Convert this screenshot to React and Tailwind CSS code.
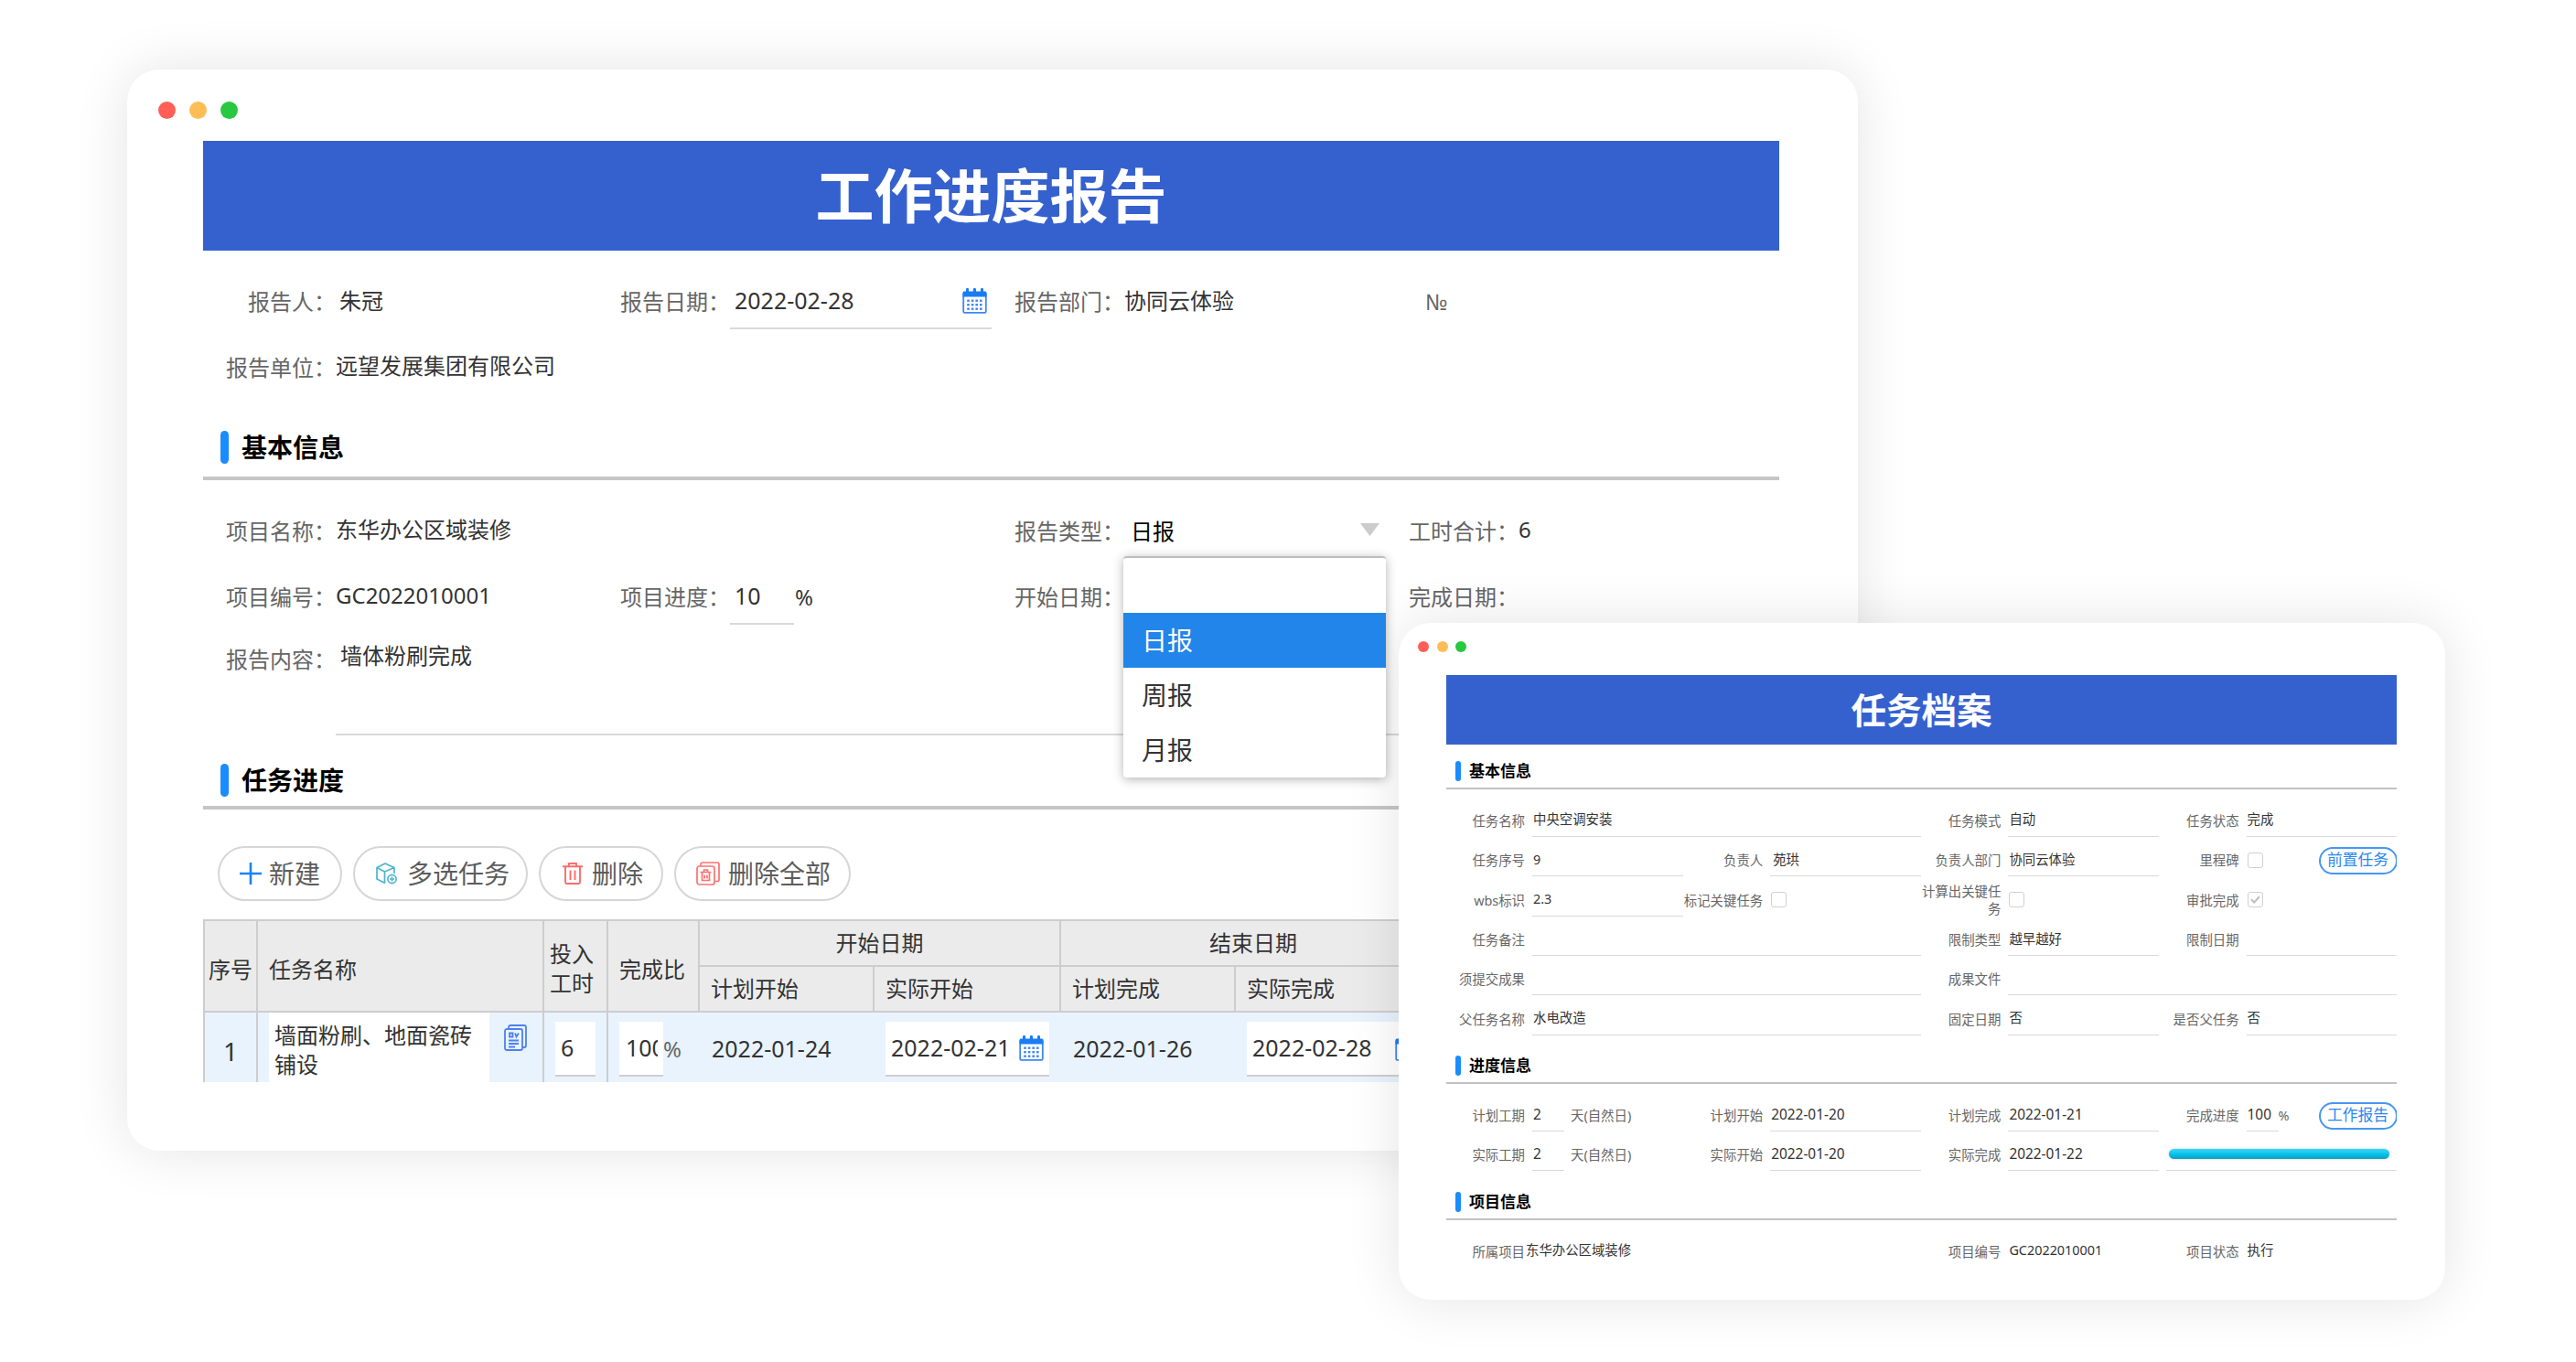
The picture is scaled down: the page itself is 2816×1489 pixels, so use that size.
import clsx from 'clsx';

const CalendarIcon = ({ className }) => (
  <svg viewBox="0 0 27 28" className={clsx('shrink-0', className)} fill="none">
    <path d="M1.2 5.5v20a1.3 1.3 0 0 0 1.3 1.3h22a1.3 1.3 0 0 0 1.3-1.3v-20" stroke="#3f86f5" strokeWidth="1.8" />
    <path d="M.5 9.5V5.2C.5 4 1.2 3.4 2.4 3.4H4V1.2C4 .5 4.500 0 5.500 0S7 .5 7 1.200v2.200h4.800V1.200C11.800.5 12.500 0 13.400 0s1.600.5 1.600 1.200v2.200h5V1.200C20 .5 20.600 0 21.500 0S23 .5 23 1.200v2.200h1.600c1.200 0 1.900.6 1.900 1.800v4.300z" fill="#1a7cf5" />
    {[12.5, 17, 21.500].map((y) =>
      [5.2, 9.8, 14.4, 19].map((x) => <rect key={`${x}-${y}`} x={x} y={y} width="2.6" height="2.4" fill="#3f86f5" />)
    )}
  </svg>
);

const PlusIcon = () => (
  <svg viewBox="0 0 24 24" className="w-6 h-6 shrink-0" fill="none" stroke="#1a84f5" strokeWidth="2.6">
    <path d="M12 0v24M0 12h24" />
  </svg>
);

const CubeIcon = () => (
  <svg viewBox="0 0 24 24" className="w-6 h-6 shrink-0" fill="none" stroke="#4fb3cf" strokeWidth="1.700" strokeLinejoin="round">
    <path d="M11 22.500 2 18V5.500L11 1l10 4.500V12M2 5.500 10.500 10 21 5.500M10.500 10v12.500" />
    <circle cx="18.500" cy="18" r="4.600" />
    <path d="M18.500 15.500v5M16 18h5" />
  </svg>
);

const TrashIcon = () => (
  <svg viewBox="0 0 22 24" className="w-[22px] h-6 shrink-0" fill="none" stroke="#ff6b6b" strokeWidth="1.900">
    <path d="M0 4.200h22M7 3.500V1h8v2.500M3 4.500V21a2 2 0 0 0 2 2h12a2 2 0 0 0 2-2V4.500M8.500 8.500v10.500M13.500 8.500v10.500" />
  </svg>
);

const TrashAllIcon = () => (
  <svg viewBox="0 0 26 26" className="w-[26px] h-[26px] shrink-0" fill="none" stroke="#ff7070" strokeWidth="1.700">
    <rect x="1" y="5" width="19" height="20" rx="2.500" />
    <path d="M5 4.500V3a2 2 0 0 1 2-2h16a2 2 0 0 1 2 2v16.500a2 2 0 0 1-2 2h-2.500M4.500 11.500h12M8.500 11V9h4v2M6.500 12v8.500h8V12M9.200 14.500v4M12 14.500v4" />
  </svg>
);

const CopyIcon = () => (
  <svg viewBox="0 0 25 29" className="w-[25px] h-[29px] shrink-0" fill="none" stroke="#4d80f0" strokeWidth="1.800">
    <rect x="1" y="5" width="19" height="23" rx="2" />
    <path d="M5 4.500V3a2 2 0 0 1 2-2h15a2 2 0 0 1 2 2v20a2 2 0 0 1-2 2h-1.500M5 17.500h11M5 21h11M5 24.500h7M6 9.500v4h3.500v-4zM12 9.500l1.500 4 2.500-4" />
  </svg>
);

/* ---------- Work progress report window ---------- */

const Label = ({ children, className }) => (
  <div className={clsx('w-[145px] shrink-0 text-right text-[24px] leading-8 text-[#666] whitespace-nowrap', className)}>{children}</div>
);

const Value = ({ children, className }) => (
  <div className={clsx('w-[286px] shrink-0 text-[24px] leading-8 text-[#333] whitespace-nowrap', className)}>{children}</div>
);

const SectionTitle = ({ children, className }) => (
  <div className={clsx('flex items-end border-b-4 border-[#c6c6c6] pl-[19px]', className)}>
    <div className="flex items-center h-9 gap-[14px]">
      <span className="w-[9px] h-9 rounded-full bg-[#1a8cff]" />
      <span className="text-[28px] leading-9 font-bold text-black">{children}</span>
    </div>
  </div>
);

const ToolButton = ({ icon, children, className }) => (
  <button className={clsx('h-[60px] flex items-center rounded-full border-2 border-[#d6d6d6] bg-white text-[28px] leading-none text-[#5c5c5c] whitespace-nowrap pl-[22px]', className)}>
    {icon}
    {children}
  </button>
);

const Th = ({ children, className }) => (
  <div className={clsx('flex items-center border-l-2 border-t-2 border-[#cdcdcd] bg-[#ebebeb] text-[24px] leading-8 text-[#333]', className)}>{children}</div>
);

const CellInput = ({ children, className }) => (
  <div className={clsx('h-[60px] flex items-center bg-white border-b-2 border-[#cfcfcf] text-[25px] text-[#333]', className)}>{children}</div>
);

const TypeSelect = () => (
  <div className="relative w-[286px] shrink-0 flex items-center justify-between pl-[7px] pr-[7px] text-[24px] leading-8 text-black">
    日报
    <svg viewBox="0 0 21 14" className="w-[21px] h-[14px] mb-1 fill-[#cccccc]">
      <path d="M0 0h21L10.500 14z" />
    </svg>
    <ul className="absolute z-10 left-[-1px] top-[43px] w-[287px] h-[242px] border-t-2 border-[#bdbdbd] rounded-[4px] bg-white shadow-[0_2px_12px_rgba(0,0,0,0.3)] text-[28px] leading-[60px] text-[#333]">
      <li className="h-[60px]" />
      <li className="h-[60px] pl-5 bg-[#2185ea] text-white">日报</li>
      <li className="h-[60px] pl-5">周报</li>
      <li className="h-[60px] pl-5">月报</li>
    </ul>
  </div>
);

const ReportWindow = () => (
  <div className="absolute left-[139px] top-[76px] w-[1892px] h-[1182px] rounded-[35px] bg-white shadow-[0_0_60px_rgba(0,0,0,0.11)]">
    <div className="h-[78px] flex items-center gap-[15px] pl-[34px] pt-[11px]">
      <span className="w-[19px] h-[19px] rounded-full bg-[#ff5f57]" />
      <span className="w-[19px] h-[19px] rounded-full bg-[#ffbd55]" />
      <span className="w-[19px] h-[19px] rounded-full bg-[#28c840]" />
    </div>

    <div className="ml-[83px] w-[1723px]">
      <h1 className="h-[119.5px] flex items-center justify-center bg-[#3561cf] text-white text-[64px] leading-none font-bold">工作进度报告</h1>

      <div className="h-[72px] mt-[20.5px] flex items-center">
        <Label>报告人：</Label>
        <Value className="pl-1 pb-[3px]">朱冠</Value>
        <Label>报告日期：</Label>
        <div className="w-[286px] h-[59px] shrink-0 flex items-center justify-between border-b-2 border-[#d9d9d9] pl-[5px] pr-[5px] text-[25px] text-[#333]">
          2022-02-28
          <CalendarIcon className="w-[27px] h-7" />
        </div>
        <Label>报告部门：</Label>
        <Value className="pb-[3px]">协同云体验</Value>
        <div className="w-[145px] pl-[43px] text-[24px] text-[#666]">№</div>
      </div>
      <div className="h-[72px] flex items-center">
        <Label>报告单位：</Label>
        <Value className="pb-1">远望发展集团有限公司</Value>
      </div>

      <SectionTitle className="h-[87px] pb-[14px]">基本信息</SectionTitle>

      <div className="h-[72px] mt-[20px] flex items-center">
        <Label>项目名称：</Label>
        <Value className="pb-1">东华办公区域装修</Value>
        <div className="w-[431px] shrink-0" />
        <Label>报告类型：</Label>
        <TypeSelect />
        <Label>工时合计：</Label>
        <Value className="pb-1">6</Value>
      </div>
      <div className="h-[72px] flex items-center">
        <Label>项目编号：</Label>
        <Value className="pb-1">GC2022010001</Value>
        <Label>项目进度：</Label>
        <div className="w-[286px] shrink-0 flex items-center text-[25px] text-[#333]">
          <div className="w-[70px] h-[59px] flex items-center border-b-2 border-[#d9d9d9] pl-[5px]">10</div>
          <span className="pl-[1px] text-[24px]">%</span>
        </div>
        <Label>开始日期：</Label>
        <Value />
        <Label>完成日期：</Label>
      </div>
      <div className="h-[115px] flex items-stretch">
        <Label className="pt-4">报告内容：</Label>
        <div className="grow border-b-2 border-[#d9d9d9] pl-[5px] pt-3 text-[24px] leading-8 text-[#333]">墙体粉刷完成</div>
      </div>

      <SectionTitle className="h-[81px] pb-[10px]">任务进度</SectionTitle>

      <div className="mt-10 ml-4 flex gap-3">
        <ToolButton className="w-[136px] gap-2" icon={<PlusIcon />}>新建</ToolButton>
        <ToolButton className="w-[191px] gap-[11px]" icon={<CubeIcon />}>多选任务</ToolButton>
        <ToolButton className="w-[136px] gap-[10px] pl-[24px]" icon={<TrashIcon />}>删除</ToolButton>
        <ToolButton className="w-[193px] gap-[9px]" icon={<TrashAllIcon />}>删除全部</ToolButton>
      </div>

      <div className="mt-[20px] grid grid-cols-[58px_313px_70px_100px_191px_204px_191px_231px_1fr] grid-rows-[50px_50px_78px] overflow-hidden">
        <Th className="row-span-2 pt-[7px] justify-center">序号</Th>
        <Th className="row-span-2 pt-[7px] pl-3">任务名称</Th>
        <Th className="row-span-2 pt-[5px] px-[6px]">投入<br />工时</Th>
        <Th className="row-span-2 pt-[7px] pl-3">完成比</Th>
        <Th className="col-span-2 justify-center">开始日期</Th>
        <Th className="col-span-2 justify-center">结束日期</Th>
        <Th className="row-span-2" />
        <Th className="pl-3">计划开始</Th>
        <Th className="pl-3">实际开始</Th>
        <Th className="pl-3">计划完成</Th>
        <Th className="pl-3">实际完成</Th>

        <div className="border-l-2 border-t-2 border-[#cdcdcd] bg-[#e8f3fd] flex items-center justify-center pt-[7px] text-[28px] text-[#333]">1</div>
        <div className="border-l-2 border-t-2 border-[#cdcdcd] bg-[#e8f3fd] flex items-start pl-3">
          <div className="w-[241px] h-[76px] bg-white pl-[6px] pt-[9px] text-[24px] leading-8 text-[#333]">墙面粉刷、地面瓷砖铺设</div>
          <div className="pl-4 pt-[13px]"><CopyIcon /></div>
        </div>
        <div className="border-l-2 border-t-2 border-[#cdcdcd] bg-[#e8f3fd] flex items-start pl-3 pt-[10px]">
          <CellInput className="w-[44px] pl-[6px]">6</CellInput>
        </div>
        <div className="border-l-2 border-t-2 border-[#cdcdcd] bg-[#e8f3fd] flex items-start pl-3 pt-[10px]">
          <CellInput className="w-[48px] pl-[7px]"><span className="w-[35px] overflow-hidden">100</span></CellInput>
          <span className="text-[24px] leading-[60px] text-[#666]">%</span>
        </div>
        <div className="border-t-2 border-[#cdcdcd] bg-[#e8f3fd] flex items-center pl-[15px] pt-[3px] text-[25px] text-[#333]">2022-01-24</div>
        <div className="border-t-2 border-[#cdcdcd] bg-[#e8f3fd] flex items-start pl-[14px] pt-[10px]">
          <CellInput className="w-[179px] pl-[6px] pr-[6px] justify-between">2022-02-21<CalendarIcon className="w-[27px] h-7" /></CellInput>
        </div>
        <div className="border-t-2 border-[#cdcdcd] bg-[#e8f3fd] flex items-center pl-[15px] pt-[3px] text-[25px] text-[#333]">2022-01-26</div>
        <div className="border-t-2 border-[#cdcdcd] bg-[#e8f3fd] flex items-start pl-[14px] pt-[10px]">
          <CellInput className="w-[196px] pl-[6px] pr-[7px] justify-between">2022-02-28<CalendarIcon className="w-[27px] h-7" /></CellInput>
        </div>
        <div className="border-t-2 border-[#cdcdcd] bg-[#e8f3fd]" />
      </div>
    </div>
  </div>
);

/* ---------- Task archive window ---------- */

const FieldLabel = ({ children }) => (
  <div className="pr-2 text-right text-[14.4px] leading-[19.4px] text-[#666]">{children}</div>
);

const Field = ({ children, className }) => (
  <div className={clsx('h-[34.5px] flex items-center border-b-[1.5px] border-[#d9d9d9] pl-[1px] pb-[2px] text-[14.4px] leading-[19px] text-[#333] whitespace-nowrap', className)}>{children}</div>
);

const FormRow = ({ children }) => (
  <div className="h-[43.4px] grid items-center grid-cols-[94px_165px_95.2px_165px_95.2px_165px_95.2px_165px]">{children}</div>
);

const SmallTitle = ({ children }) => (
  <div className="h-[48.8px] flex items-end border-b-2 border-[#c2c2c2] pl-[10px] pb-[6.5px]">
    <div className="flex items-center h-[22px] gap-[9px]">
      <span className="w-[6px] h-[22px] rounded-full bg-[#1a8cff]" />
      <span className="text-[17px] leading-[22px] font-bold text-black">{children}</span>
    </div>
  </div>
);

const Checkbox = ({ checked }) => (
  <div className="ml-[1px] w-[17px] h-[17px] mb-[1px] rounded-[3px] border-[1.5px] border-[#d0d0d0] bg-white">
    {checked && (
      <svg viewBox="0 0 15 15" className="w-full h-full" fill="none" stroke="#bdbdbd" strokeWidth="2">
        <path d="m3 7.200 3.200 3.300L12 4.200" />
      </svg>
    )}
  </div>
);

const PillButton = ({ children }) => (
  <button className="w-[86px] h-[30px] shrink-0 flex items-center justify-center rounded-full border-2 border-[#4596f2] bg-white text-[16.8px] leading-none text-[#2a86f0] whitespace-nowrap">{children}</button>
);

const ArchiveWindow = () => (
  <div className="absolute left-[1529px] top-[681px] w-[1144px] h-[740px] rounded-[35px] bg-white shadow-[0_0_60px_rgba(0,0,0,0.11)]">
    <div className="h-[57px] flex items-start gap-[8.5px] pl-[21px] pt-[19.5px]">
      <span className="w-[12px] h-[12px] rounded-full bg-[#ff5f57]" />
      <span className="w-[12px] h-[12px] rounded-full bg-[#ffbd55]" />
      <span className="w-[12px] h-[12px] rounded-full bg-[#28c840]" />
    </div>

    <div className="ml-[52px] w-[1039px] overflow-hidden">
      <h2 className="h-[76px] flex items-center justify-center bg-[#3561cf] text-white text-[38.5px] leading-none font-bold">任务档案</h2>

      <SmallTitle>基本信息</SmallTitle>
      <div className="pt-[13px]">
        <FormRow>
          <FieldLabel>任务名称</FieldLabel>
          <Field className="col-span-3">中央空调安装</Field>
          <FieldLabel>任务模式</FieldLabel>
          <Field>自动</Field>
          <FieldLabel>任务状态</FieldLabel>
          <Field>完成</Field>
        </FormRow>
        <FormRow>
          <FieldLabel>任务序号</FieldLabel>
          <Field>9</Field>
          <FieldLabel>负责人</FieldLabel>
          <Field className="pl-[3px]">苑珙</Field>
          <FieldLabel>负责人部门</FieldLabel>
          <Field>协同云体验</Field>
          <FieldLabel>里程碑</FieldLabel>
          <div className="flex items-center justify-between">
            <Checkbox />
            <PillButton>前置任务</PillButton>
          </div>
        </FormRow>
        <FormRow>
          <FieldLabel>wbs标识</FieldLabel>
          <Field>2.3</Field>
          <FieldLabel>标记关键任务</FieldLabel>
          <Checkbox />
          <FieldLabel>计算出关键任务</FieldLabel>
          <Checkbox />
          <FieldLabel>审批完成</FieldLabel>
          <Checkbox checked />
        </FormRow>
        <FormRow>
          <FieldLabel>任务备注</FieldLabel>
          <Field className="col-span-3" />
          <FieldLabel>限制类型</FieldLabel>
          <Field>越早越好</Field>
          <FieldLabel>限制日期</FieldLabel>
          <Field />
        </FormRow>
        <FormRow>
          <FieldLabel>须提交成果</FieldLabel>
          <Field className="col-span-3" />
          <FieldLabel>成果文件</FieldLabel>
          <Field className="col-span-3" />
        </FormRow>
        <FormRow>
          <FieldLabel>父任务名称</FieldLabel>
          <Field className="col-span-3">水电改造</Field>
          <FieldLabel>固定日期</FieldLabel>
          <Field>否</Field>
          <FieldLabel>是否父任务</FieldLabel>
          <Field>否</Field>
        </FormRow>
      </div>

      <SmallTitle>进度信息</SmallTitle>
      <div className="pt-[13px]">
        <FormRow>
          <FieldLabel>计划工期</FieldLabel>
          <div className="flex items-center gap-[7px] text-[14.4px] text-[#666]">
            <Field className="w-[35px] text-[15.4px]">2</Field>
            天(自然日)
          </div>
          <FieldLabel>计划开始</FieldLabel>
          <Field className="text-[15.4px]">2022-01-20</Field>
          <FieldLabel>计划完成</FieldLabel>
          <Field className="text-[15.4px]">2022-01-21</Field>
          <FieldLabel>完成进度</FieldLabel>
          <div className="flex items-center text-[14.4px] text-[#666]">
            <Field className="w-[35px] text-[15.4px]">100</Field>
            %
            <div className="ml-auto"><PillButton>工作报告</PillButton></div>
          </div>
        </FormRow>
        <FormRow>
          <FieldLabel>实际工期</FieldLabel>
          <div className="flex items-center gap-[7px] text-[14.4px] text-[#666]">
            <Field className="w-[35px] text-[15.4px]">2</Field>
            天(自然日)
          </div>
          <FieldLabel>实际开始</FieldLabel>
          <Field className="text-[15.4px]">2022-01-20</Field>
          <FieldLabel>实际完成</FieldLabel>
          <Field className="text-[15.4px]">2022-01-22</Field>
          <Field className="col-span-2 ml-2 pl-[3px]">
            <div className="w-[241px] h-[11px] rounded-full bg-linear-to-b from-[#35d8f8] via-[#06c3ea] to-[#0a9fc6] shadow-[0_0_3px_rgba(230,150,130,0.5)]" />
          </Field>
        </FormRow>
      </div>

      <SmallTitle>项目信息</SmallTitle>
      <div className="pt-[13px]">
        <FormRow>
          <FieldLabel>所属项目</FieldLabel>
          <Field className="border-transparent -ml-2 col-span-3">东华办公区域装修</Field>
          <FieldLabel>项目编号</FieldLabel>
          <Field className="border-transparent">GC2022010001</Field>
          <FieldLabel>项目状态</FieldLabel>
          <Field className="border-transparent">执行</Field>
        </FormRow>
      </div>
    </div>
  </div>
);

const App = () => (
  <div className="relative w-[2816px] h-[1489px] overflow-hidden bg-white font-['Noto_Sans','Noto_Sans_CJK_SC',sans-serif]">
    <ReportWindow />
    <ArchiveWindow />
  </div>
);

export default App;
